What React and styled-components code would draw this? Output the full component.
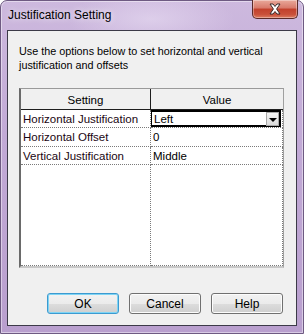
import React from 'react'
import styled, { createGlobalStyle } from 'styled-components'

const GlobalStyle = createGlobalStyle`
  html, body {
    margin: 0;
    padding: 0;
    background: #ffffff;
  }
  body {
    font-family: "Liberation Sans", Arial, sans-serif;
    font-size: 12px;
    color: #000;
  }
`

const Window = styled.div`
  width: 304px;
  height: 334px;
  box-sizing: border-box;
  display: flex;
  flex-direction: column;
  border: 1px solid #6e5a82;
  border-radius: 7px 7px 0 0;
  background:
    radial-gradient(ellipse 120px 40px at 150px 18px, rgba(235, 225, 245, 0.55), rgba(235, 225, 245, 0) 70%),
    linear-gradient(#cdb9de, #c2aad6 40%, #b99fce);
  box-shadow: inset 0 0 0 1px rgba(255, 255, 255, 0.45);
`

const TitleBar = styled.div`
  height: 29px;
  display: flex;
  align-items: flex-start;
  justify-content: space-between;
  padding-left: 7px;
  padding-right: 5px;
`

const Title = styled.div`
  margin-top: 7px;
  font-size: 12px;
  color: #000;
  text-shadow: 0 0 6px rgba(255, 255, 255, 0.9);
`

const CloseButton = styled.div`
  width: 46px;
  height: 19px;
  margin-top: -1px;
  box-sizing: border-box;
  border: 1px solid #5a2a2a;
  border-top: none;
  border-radius: 0 0 5px 5px;
  background: linear-gradient(#e9a99b, #d8796a 45%, #c2402c 50%, #c9503a 80%, #dc7c62);
  box-shadow: inset 0 0 0 1px rgba(255, 255, 255, 0.35);
  display: flex;
  align-items: center;
  justify-content: center;
`

const Client = styled.div`
  flex: 1;
  margin: 0 6px 7px 6px;
  border: 1px solid #3c3a48;
  background: #f0f0f0;
  display: flex;
  flex-direction: column;
  padding: 13px 12px 0 11px;
`

const Description = styled.p`
  margin: 0;
  font-size: 10.8px;
  line-height: 14px;
  color: #000;
`

const Table = styled.div`
  margin-top: 16px;
  width: 265px;
  height: 180px;
  box-sizing: border-box;
  border-top: 1px solid #9a9a9a;
  border-left: 2px solid #6a6a6a;
  border-right: 1px solid #a0a0a0;
  border-bottom: 2px solid #c8c8c8;
  background: #fff;
  display: grid;
  grid-template-columns: 130px 1fr;
  grid-template-rows: 21px 18px 19px 18px 1fr;
  font-size: 11.5px;
`

const HeaderCell = styled.div`
  background: #f0f0f0;
  border-bottom: 1px solid #1e1e1e;
  border-right: ${p => (p.$last ? 'none' : '1px solid #1e1e1e')};
  display: flex;
  align-items: center;
  justify-content: center;
  padding-top: 1px;
`

const Cell = styled.div`
  border-bottom: 1px dotted #7a7a7a;
  border-right: 1px dotted #7a7a7a;
  display: flex;
  align-items: center;
  padding-left: 2px;
  white-space: nowrap;
  overflow: hidden;
  color: ${p => (p.$name ? '#1a0612' : '#000')};
`

const ComboCell = styled.div`
  border-bottom: 1px dotted #7a7a7a;
  border-right: 1px dotted #7a7a7a;
  padding: 0 1px 0 0;
  display: flex;
`

const Combo = styled.div`
  flex: 1;
  box-sizing: border-box;
  border: 2px solid #000;
  border-left-width: 1px;
  display: flex;
  align-items: center;
  justify-content: space-between;
  padding-left: 2px;
  background: #fff;
`

const DropButton = styled.div`
  width: 13px;
  height: 14px;
  box-sizing: border-box;
  border: 1px solid #a8a8a8;
  background: linear-gradient(#f4f4f4, #dcdcdc);
  display: flex;
  align-items: center;
  justify-content: center;
`

const Arrow = styled.div`
  width: 0;
  height: 0;
  border-left: 4px solid transparent;
  border-right: 4px solid transparent;
  border-top: 4px solid #000;
  margin-top: 2px;
`

const Filler = styled.div`
  border-bottom: 1px dotted #7a7a7a;
  border-right: 1px dotted #7a7a7a;
`

const ButtonRow = styled.div`
  margin-top: 25px;
  display: flex;
  justify-content: flex-end;
  gap: 10px;
  padding-right: 1px;
`

const Button = styled.button`
  width: 72px;
  height: 21px;
  box-sizing: border-box;
  font-family: "Liberation Sans", Arial, sans-serif;
  font-size: 12px;
  color: #000;
  padding: 0;
  border-radius: 3px;
  border: 1px solid ${p => (p.$default ? '#3c9ad0' : '#707070')};
  background: linear-gradient(#f2f2f2, #ebebeb 50%, #dddddd 51%, #cfcfcf);
  box-shadow: ${p => (p.$default ? 'inset 0 0 0 1px #7fd4f4' : 'inset 0 0 0 1px #fcfcfc')};
`

const rows = [
  { name: 'Horizontal Justification', value: 'Left', combo: true },
  { name: 'Horizontal Offset', value: '0' },
  { name: 'Vertical Justification', value: 'Middle' },
]

const CloseIcon = () => (
  <svg width="14" height="12" viewBox="0 0 14 12">
    <path
      d="M2 1 L5 1 L7 3.5 L9 1 L12 1 L8.6 6 L12 11 L9 11 L7 8.5 L5 11 L2 11 L5.4 6 Z"
      fill="#ffffff"
      stroke="#3a2a2a"
      strokeWidth="1"
      strokeLinejoin="round"
    />
  </svg>
)

const App = () => {
  return (
    <>
      <GlobalStyle />
      <Window>
        <TitleBar>
          <Title>Justification Setting</Title>
          <CloseButton>
            <CloseIcon />
          </CloseButton>
        </TitleBar>
        <Client>
          <Description>
            Use the options below to set horizontal and vertical justification and offsets
          </Description>
          <Table>
            <HeaderCell>Setting</HeaderCell>
            <HeaderCell $last>Value</HeaderCell>
            {rows.map(r => (
              <React.Fragment key={r.name}>
                <Cell $name>{r.name}</Cell>
                {r.combo ? (
                  <ComboCell>
                    <Combo>
                      {r.value}
                      <DropButton>
                        <Arrow />
                      </DropButton>
                    </Combo>
                  </ComboCell>
                ) : (
                  <Cell>{r.value}</Cell>
                )}
              </React.Fragment>
            ))}
            <Filler />
            <Filler />
          </Table>
          <ButtonRow>
            <Button $default>OK</Button>
            <Button>Cancel</Button>
            <Button>Help</Button>
          </ButtonRow>
        </Client>
      </Window>
    </>
  )
}

export default App
